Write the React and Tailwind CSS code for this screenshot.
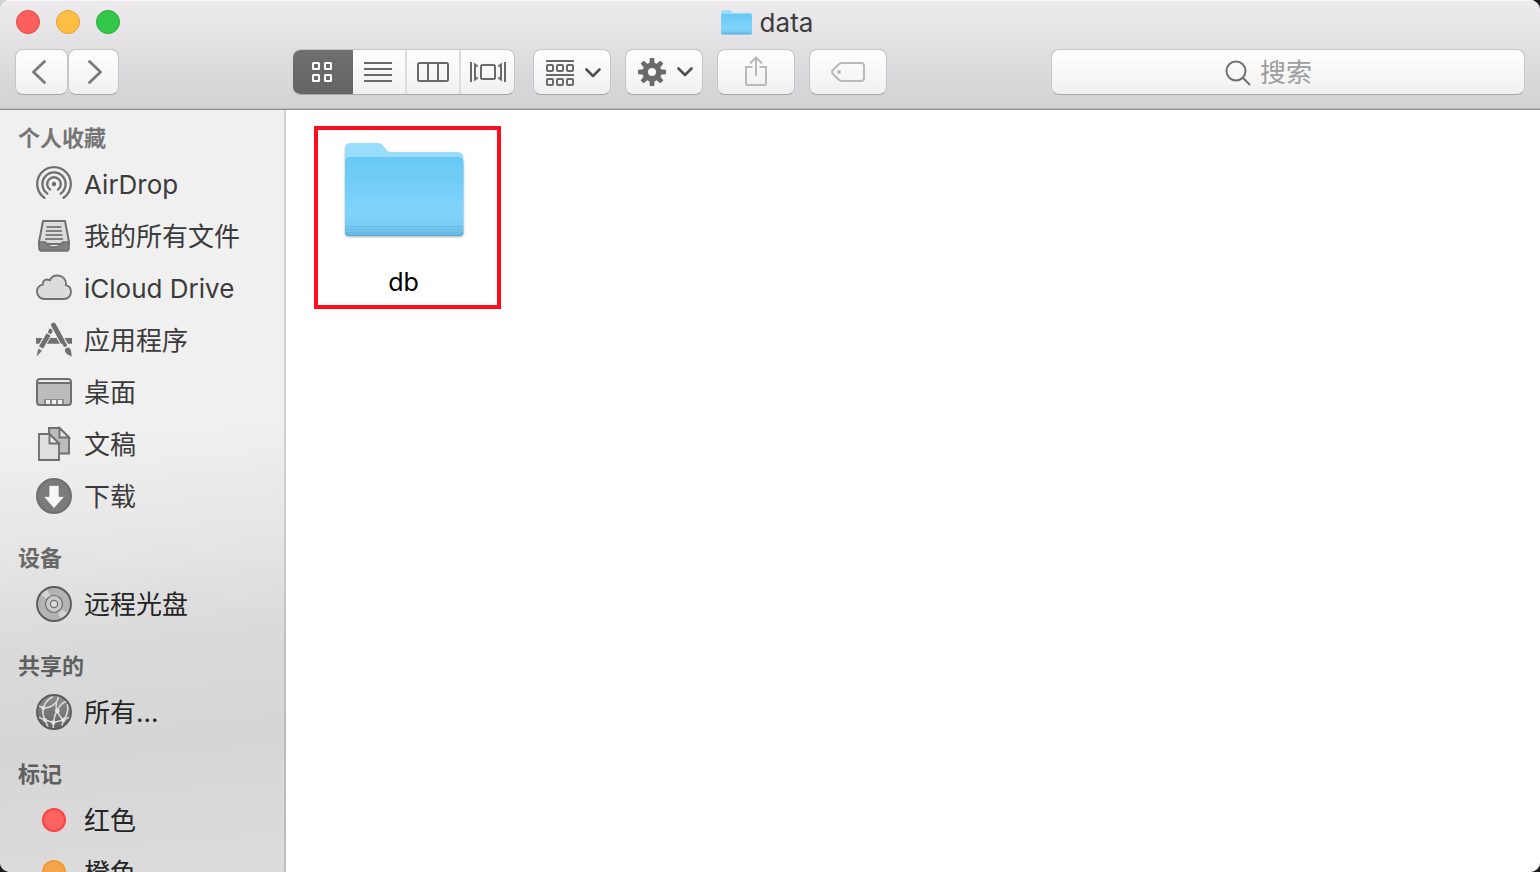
import React from 'react';

const FolderIcon = ({ className, id }) => (
  <svg viewBox="0 0 120 96" className={className} aria-hidden="true">
    <defs>
      <linearGradient id={id} x1="0" y1="0" x2="0" y2="1">
        <stop offset="0" stopColor="#67c8f5" />
        <stop offset="0.7" stopColor="#80d4fa" />
        <stop offset="0.86" stopColor="#79cdf4" />
        <stop offset="1" stopColor="#62b9e6" />
      </linearGradient>
    </defs>
    <path d="M1 90 V7 Q1 1 7 1 H34 Q37 1 39 4 L43 9 Q44 10 47 10 H113 Q119 10 119 16 V90 Z" fill="#98ddfe" />
    <path d="M1 21 Q1 15 6 15 H114 Q119.500 15 119.500 21 V90 Q119.500 94 115 94 H5 Q1 94 1 90 Z" fill={`url(#${id})`} />
    <path d="M1 84.500 H119 M1 87.500 H119 M1 90.500 H119" stroke="#68b9e2" strokeWidth="0.800" />
    <path d="M1.500 91 Q2 93.500 5 93.500 H115 Q118.500 93.500 119 91" fill="none" stroke="#58a9d4" strokeWidth="1" />
  </svg>
);

const AirDropIcon = () => (
  <svg viewBox="0 0 36 36" className="size-9" fill="none" stroke="#707070" strokeWidth="2.300" strokeLinecap="round">
    <path d="M8.400 31.800 A16.800 16.800 0 1 1 27.600 31.800" />
    <path d="M11.400 27.600 A11.600 11.600 0 1 1 24.600 27.600" />
    <path d="M14.100 23.600 A6.800 6.800 0 1 1 21.900 23.600" />
    <circle cx="18" cy="18" r="2.200" fill="#707070" stroke="none" />
  </svg>
);

const AllFilesIcon = () => (
  <svg viewBox="0 0 36 36" className="size-9">
    <path d="M7 3 H29 L33 24 V26 H3 V24 Z" fill="#dcdcdc" stroke="#707070" strokeWidth="2" strokeLinejoin="round" />
    <path d="M10.500 9 H25.500 M10 13 H26 M9.500 17 H26.500 M9 21 H27" stroke="#808080" strokeWidth="1.800" />
    <path d="M3 24 H9.500 C11 27 13.500 29 18 29 C22.500 29 25 27 26.500 24 H33 V31 L31.500 33 H4.500 L3 31 Z" fill="#808080" stroke="#707070" strokeWidth="1.600" strokeLinejoin="round" />
  </svg>
);

const CloudIcon = () => (
  <svg viewBox="0 0 36 36" className="size-9">
    <path
      d="M8.500 29 C4.500 29 1 26 1 21.800 C1 18 3.500 15.300 6.800 14.600 C6.500 11.500 8.500 9.500 11 9.500 C12 9.500 13 9.800 13.800 10.400 C15 7.400 18 5.500 21.500 5.500 C26.300 5.500 30 9 30 13.600 L29.900 15.200 C33 15.900 35 18.500 35 22 C35 26 32 29 28 29 Z"
      fill="#dcdcdc"
      stroke="#707070"
      strokeWidth="1.800"
    />
  </svg>
);

const ApplicationsIcon = () => (
  <svg viewBox="0 0 36 36" className="size-9" strokeLinecap="round">
    <path d="M0 16 H36 V21.700 H0 Z" fill="#707070" />
    <path d="M15 8 L4 27" stroke="#f0f0f0" strokeWidth="6.600" strokeLinecap="butt" />
    <path d="M12.600 12.500 L5 25.500" stroke="#707070" strokeWidth="4.600" strokeLinecap="butt" />
    <path d="M14.800 8.600 L14.200 9.700" stroke="#707070" strokeWidth="4.200" />
    <path d="M2.300 26.600 L6 28.800 L0.600 34.400 Z" fill="#707070" />
    <path d="M17.500 3.500 L30 25.500" stroke="#f0f0f0" strokeWidth="7" strokeLinecap="butt" />
    <path d="M17.500 3 L26.500 19.500" stroke="#707070" strokeWidth="4.800" />
    <path d="M28.300 21.800 L29 23" stroke="#707070" strokeWidth="3.800" />
    <path d="M28.800 28 C29.500 25.500 32.500 24.500 34.200 27 C35.500 29 35.300 31.500 35.700 34.500 C32.500 33 29 31.500 28.800 28 Z" fill="#707070" />
  </svg>
);

const DesktopIcon = () => (
  <svg viewBox="0 0 36 36" className="size-9">
    <rect x="1" y="5" width="34" height="26" rx="3" fill="#bcbcbc" />
    <path d="M2 5.500 H34 V8 H2 Z" fill="#ececec" />
    <path d="M1 9 H35" stroke="#707070" strokeWidth="1.800" />
    <rect x="8" y="25" width="20" height="6" fill="#8a8a8a" />
    <path d="M10 26 H14 V30 H10 Z M16 26 H20 V30 H16 Z M22 26 H26 V30 H22 Z" fill="#f0f0f0" />
    <rect x="1" y="5" width="34" height="26" rx="3" fill="none" stroke="#707070" strokeWidth="2" />
  </svg>
);

const DocumentsIcon = () => (
  <svg viewBox="0 0 36 36" className="size-9" stroke="#707070" strokeWidth="1.900">
    <path d="M13 2 H23.500 L33 11.500 V27.500 H13 Z" fill="#bcbcbc" />
    <path d="M23.500 2 V11.500 H33 Z" fill="#e8e8e8" />
    <path d="M3 8 H13.500 L23 17.500 V34 H3 Z" fill="#dfdfdf" />
    <path d="M13.500 8 V17.500 H23 Z" fill="#ececec" />
  </svg>
);

const DownloadsIcon = () => (
  <svg viewBox="0 0 36 36" className="size-9">
    <circle cx="18" cy="18" r="17" fill="#7b7b7b" stroke="#6f6f6f" strokeWidth="2" />
    <path d="M13 7.500 H23 V18.500 H28.500 L18 30.500 L7.500 18.500 H13 Z" fill="#f6f6f6" stroke="#6a6a6a" strokeWidth="0.600" />
  </svg>
);

const DiscIcon = () => (
  <svg viewBox="0 0 36 36" className="size-9">
    <circle cx="18" cy="18" r="17" fill="#b3b3b3" />
    <path d="M18 18 L4.500 8.500 A17 17 0 0 1 11 3 Z M18 18 L31.500 27.500 A17 17 0 0 1 25 33 Z" fill="#d2d2d2" />
    <circle cx="18" cy="18" r="17" fill="none" stroke="#5c5c5c" strokeWidth="1.900" />
    <circle cx="18" cy="18" r="8.500" fill="#cacaca" stroke="#6c6c6c" strokeWidth="1.200" />
    <circle cx="18" cy="18" r="3.600" fill="#dcdcdc" stroke="#6c6c6c" strokeWidth="1.200" />
  </svg>
);

const NetworkIcon = () => (
  <svg viewBox="0 0 36 36" className="size-9">
    <defs>
      <linearGradient id="globe" x1="0" y1="0" x2="0" y2="1">
        <stop offset="0" stopColor="#8f8f8f" />
        <stop offset="1" stopColor="#626262" />
      </linearGradient>
    </defs>
    <circle cx="18" cy="18" r="17" fill="url(#globe)" />
    <g fill="none" stroke="#dadada" strokeWidth="1.600">
      <path d="M7.300 14 C13 14 18 11 20.500 8 C22 6 22.500 4 22.500 1.500" />
      <path d="M7.300 14 C9 9 12 5 17 2.500" />
      <path d="M2 11.500 L7.300 14 C6.500 18 7 22 9 26" />
      <path d="M20.500 8 C19.500 12 20 14 21.300 17 C22.500 20.500 24.500 23.500 27.300 26" />
      <path d="M21.300 17 C23 12 27 8 31.500 7" />
      <path d="M21.300 17 C18.500 20.500 17.300 25 17.300 34" />
      <path d="M2 23 L9 26 L17.300 28.500 L27.300 26 L34 23" />
      <path d="M27.300 26 C30.500 22.500 32.500 17 31.500 10" />
      <path d="M9 26 L12 33 M27.300 26 L26 32" />
    </g>
    <g fill="#e2e2e2">
      <circle cx="7.300" cy="14" r="2" />
      <circle cx="21.300" cy="17" r="2.400" />
      <circle cx="17.300" cy="28.500" r="2.200" />
      <circle cx="27.300" cy="26" r="2.200" />
      <circle cx="9" cy="26" r="2" />
    </g>
    <circle cx="18" cy="18" r="17" fill="none" stroke="#5c5c5c" strokeWidth="1.900" />
  </svg>
);

const TagDot = ({ className }) => (
  <span className="flex w-9 justify-center">
    <span className={`size-6 rounded-full border-2 ${className}`}></span>
  </span>
);

const ChevronIcon = () => (
  <svg viewBox="0 0 16 10" className="h-2.5 w-4" fill="none" stroke="#505050" strokeWidth="2.600" strokeLinecap="round" strokeLinejoin="round">
    <path d="M1.500 1.500 L8 8 L14.500 1.500" />
  </svg>
);

const BackIcon = () => (
  <svg viewBox="0 0 14 24" className="h-6 w-3.5" fill="none" stroke="#7b7b7b" strokeWidth="2.800" strokeLinecap="round" strokeLinejoin="round">
    <path d="M12.500 1.500 L1.500 12 L12.500 22.500" />
  </svg>
);

const ForwardIcon = () => (
  <svg viewBox="0 0 14 24" className="h-6 w-3.5" fill="none" stroke="#7b7b7b" strokeWidth="2.800" strokeLinecap="round" strokeLinejoin="round">
    <path d="M1.500 1.500 L12.500 12 L1.500 22.500" />
  </svg>
);

const GridIcon = () => (
  <svg viewBox="0 0 20 20" className="size-5" fill="none" stroke="#fff" strokeWidth="2">
    <rect x="1" y="1" width="6" height="6" rx="0.500" />
    <rect x="13" y="1" width="6" height="6" rx="0.500" />
    <rect x="1" y="13" width="6" height="6" rx="0.500" />
    <rect x="13" y="13" width="6" height="6" rx="0.500" />
  </svg>
);

const ListIcon = () => (
  <svg viewBox="0 0 28 20" className="h-5 w-7" stroke="#6a6a6a" strokeWidth="2">
    <path d="M0 1 H28 M0 7 H28 M0 13 H28 M0 19 H28" />
  </svg>
);

const ColumnsIcon = () => (
  <svg viewBox="0 0 32 20" className="h-5 w-8" fill="none" stroke="#6a6a6a" strokeWidth="2">
    <rect x="1" y="1" width="30" height="18" rx="1.500" />
    <path d="M11 1 V19 M21 1 V19" />
  </svg>
);

const CoverFlowIcon = () => (
  <svg viewBox="0 0 36 20" className="h-5 w-9" fill="none" stroke="#6a6a6a" strokeWidth="2">
    <path d="M1 0 V20 M35 0 V20" />
    <path d="M4 0.500 L8 3.500 V5 L6 4.500 V15.500 L8 15 V16.500 L4 19.500 Z" fill="#6a6a6a" stroke="none" />
    <path d="M32 0.500 L28 3.500 V5 L30 4.500 V15.500 L28 15 V16.500 L32 19.500 Z" fill="#6a6a6a" stroke="none" />
    <rect x="11" y="3" width="14" height="14" rx="1.500" />
  </svg>
);

const ArrangeIcon = () => (
  <svg viewBox="0 0 28 26" className="h-[26px] w-7" fill="none" stroke="#6a6a6a" strokeWidth="2">
    <path d="M0 1 H28 M0 15 H28" />
    <rect x="1" y="5" width="6" height="6" rx="1" />
    <rect x="11" y="5" width="6" height="6" rx="1" />
    <rect x="21" y="5" width="6" height="6" rx="1" />
    <rect x="1" y="19" width="6" height="6" rx="1" />
    <rect x="11" y="19" width="6" height="6" rx="1" />
    <rect x="21" y="19" width="6" height="6" rx="1" />
  </svg>
);

const GearIcon = () => (
  <svg viewBox="0 0 28 28" className="size-7">
    <circle cx="14" cy="14" r="6.800" fill="none" stroke="#6a6a6a" strokeWidth="5.600" />
    {[0, 45, 90, 135, 180, 225, 270, 315].map((angle) => (
      <path key={angle} d="M11.800 0.500 Q11.900 0 12.400 0 H15.600 Q16.100 0 16.200 0.500 L16.700 6 H11.300 Z" fill="#6a6a6a" transform={`rotate(${angle} 14 14)`} />
    ))}
  </svg>
);

const ShareIcon = () => (
  <svg viewBox="0 0 22 30" className="h-[30px] w-[22px]" fill="none" stroke="#b9b9b9" strokeWidth="2">
    <path d="M7.500 11 H1 V28 Q1 29 2 29 H20 Q21 29 21 28 V11 H14.500" />
    <path d="M11 20 V1.500 M5 7.500 L11 1.500 L17 7.500" />
  </svg>
);

const TagIcon = () => (
  <svg viewBox="0 0 34 20" className="h-5 w-[34px]" fill="none" stroke="#b9b9b9" strokeWidth="2">
    <path d="M11 1 H30 Q33 1 33 4 V16 Q33 19 30 19 H11 Q9 19 7.500 17.500 L1.500 11.500 Q0.500 10 1.500 8.500 L7.500 2.500 Q9 1 11 1 Z" />
    <circle cx="8" cy="10" r="2" fill="#b9b9b9" stroke="none" />
  </svg>
);

const SearchIcon = () => (
  <svg viewBox="0 0 26 26" className="size-[26px]" fill="none" stroke="#707070" strokeWidth="2">
    <circle cx="11" cy="11" r="9.500" />
    <path d="M17.800 17.800 L25 25" />
  </svg>
);

const sections = [
  {
    title: '个人收藏',
    titleColor: 'text-[#757575]',
    itemColor: 'text-[#3b3b3b]',
    spacing: 'mt-2',
    items: [
      { label: 'AirDrop', icon: <AirDropIcon /> },
      { label: '我的所有文件', icon: <AllFilesIcon /> },
      { label: 'iCloud Drive', icon: <CloudIcon /> },
      { label: '应用程序', icon: <ApplicationsIcon /> },
      { label: '桌面', icon: <DesktopIcon /> },
      { label: '文稿', icon: <DocumentsIcon /> },
      { label: '下载', icon: <DownloadsIcon /> },
    ],
  },
  {
    title: '设备',
    titleColor: 'text-[#686868]',
    itemColor: 'text-[#242424]',
    spacing: 'mt-4',
    items: [{ label: '远程光盘', icon: <DiscIcon /> }],
  },
  {
    title: '共享的',
    titleColor: 'text-[#5f5f5f]',
    itemColor: 'text-[#242424]',
    spacing: 'mt-4',
    items: [{ label: '所有...', icon: <NetworkIcon /> }],
  },
  {
    title: '标记',
    titleColor: 'text-[#5f5f5f]',
    itemColor: 'text-[#242424]',
    spacing: 'mt-4',
    items: [
      { label: '红色', icon: <TagDot className="border-[#fc4242] bg-[#fd6461]" /> },
      { label: '橙色', icon: <TagDot className="border-[#f8962c] bg-[#f6a54f]" /> },
    ],
  },
];

const views = [
  { name: '图标', icon: <GridIcon />, style: 'w-[60px] pr-0.5 bg-linear-to-b from-[#6f6f6f] to-[#646464]' },
  { name: '列表', icon: <ListIcon />, style: 'w-[52px] pr-0.5' },
  { name: '分栏', icon: <ColumnsIcon />, style: 'w-[54px] border-l-2 border-[#dcdcdc]' },
  { name: 'Cover Flow', icon: <CoverFlowIcon />, style: 'w-[55px] border-l-2 border-[#dcdcdc]' },
];

const buttonStyle =
  'flex h-[46px] shrink-0 items-center justify-center rounded-lg border border-[#c6c5c7] border-b-[#a9a9a9] bg-linear-to-b from-white to-[#f0f0f0]';

const ToolbarButton = ({ label, className, disabled, children }) => (
  <button type="button" aria-label={label} disabled={disabled} className={`${buttonStyle} ${className}`}>
    {children}
  </button>
);

const Toolbar = () => (
  <div className="flex items-center pt-[5px] pr-[15px] pb-3.5 pl-[15px]">
    <div className="flex w-[278px] shrink-0">
      <ToolbarButton label="后退" className="w-[53px] pr-1.5"><BackIcon /></ToolbarButton>
      <ToolbarButton label="前进" className="w-[51px] pl-0.5"><ForwardIcon /></ToolbarButton>
    </div>

    <div className="flex h-[46px] shrink-0 overflow-hidden rounded-lg border border-l-0 border-[#c6c5c7] border-b-[#a9a9a9] bg-linear-to-b from-white to-[#f0f0f0]">
      {views.map((view, index) => (
        <button
          key={view.name}
          type="button"
          aria-label={view.name}
          aria-pressed={index === 0}
          className={`flex items-center justify-center ${view.style}`}
        >
          {view.icon}
        </button>
      ))}
    </div>

    <div className="ml-[18px] flex gap-3.5">
      <ToolbarButton label="排列" className="w-[78px] gap-[11px] pt-0.5 pl-0.5"><ArrangeIcon /><ChevronIcon /></ToolbarButton>
      <ToolbarButton label="操作" className="w-[78px] gap-[11px] pl-0.5"><GearIcon /><ChevronIcon /></ToolbarButton>
      <ToolbarButton label="共享" className="w-[78px] pb-0.5" disabled><ShareIcon /></ToolbarButton>
      <ToolbarButton label="标记" className="w-[78px]" disabled><TagIcon /></ToolbarButton>
    </div>

    <label className={`${buttonStyle} ml-auto w-[474px] gap-2 pt-0.5 pr-9`}>
      <SearchIcon />
      <input
        type="text"
        aria-label="搜索"
        placeholder="搜索"
        className="w-14 bg-transparent pl-px text-[26px] leading-10 text-[#3b3b3b] outline-none placeholder:text-[#9d9d9d]"
      />
    </label>
  </div>
);

const Sidebar = () => (
  <nav className="w-[286px] shrink-0 overflow-hidden border-r-2 border-black/12 bg-[linear-gradient(175deg,#f0f0f0_0%,#f0f0f0_42%,#e7e7e7_55%,#dadada_69%,#d6d6d6_82%,#dcdcdc_100%)]">
    {sections.map((section) => (
      <section key={section.title} className={section.spacing}>
        <h2 className={`flex h-10 items-center pl-[18px] text-[22px] font-bold ${section.titleColor}`}>
          {section.title}
        </h2>
        <ul>
          {section.items.map((item) => (
            <li key={item.label}>
              <a href="#" className={`flex h-[52px] items-center gap-3 pl-9 text-[26px] whitespace-nowrap ${section.itemColor}`}>
                {item.icon}
                <span>{item.label}</span>
              </a>
            </li>
          ))}
        </ul>
      </section>
    ))}
  </nav>
);

const App = () => {
  return (
    <div className="h-screen bg-linear-to-br from-[#d8d8d8] from-0% to-[#1e1e1e] to-5%">
      <div className="flex h-full flex-col overflow-hidden rounded-[10px] bg-white font-['Inter','Noto_Sans_CJK_SC',sans-serif]">
        <header className="shrink-0 border-b border-[#8f8f8f] bg-linear-to-b from-[#edebee] to-[#d2d1d3] shadow-[inset_0_1px_0_#f7f6f8,inset_0_-1px_0_#bdbcbe]">
          <div className="grid h-11 grid-cols-[1fr_auto_1fr] items-center px-4">
            <div className="flex gap-4">
              <button type="button" aria-label="关闭" className="size-6 rounded-full border border-[#e2463f] bg-[#fd605c]"></button>
              <button type="button" aria-label="最小化" className="size-6 rounded-full border border-[#e1a034] bg-[#fdbe41]"></button>
              <button type="button" aria-label="缩放" className="size-6 rounded-full border border-[#24ac36] bg-[#34c84a]"></button>
            </div>
            <div className="flex items-center gap-2 pr-1.5">
              <FolderIcon id="title-folder" className="h-[25px] w-[31px]" />
              <h1 className="pt-0.5 text-[26px] leading-10 text-[#3c3c3c]">data</h1>
            </div>
          </div>
          <Toolbar />
        </header>

        <div className="flex min-h-0 flex-1">
          <Sidebar />
          <main className="flex-1 bg-white pt-4 pl-7">
            <button type="button" className="flex w-[187px] flex-col items-center border-4 border-[#ff0d1f] pt-3 pr-2 pb-1">
              <FolderIcon id="db-folder" className="h-24 w-[120px] drop-shadow-[0_1px_1px_rgba(0,0,0,0.3)]" />
              <span className="mt-[26px] text-[25px] leading-[37px] text-black">db</span>
            </button>
          </main>
        </div>
      </div>
    </div>
  );
};

export default App;
